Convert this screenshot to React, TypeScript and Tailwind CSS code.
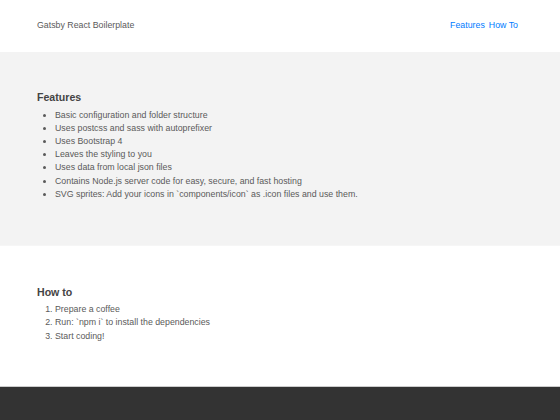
import React from 'react';

const features = [
  'Basic configuration and folder structure',
  'Uses postcss and sass with autoprefixer',
  'Uses Bootstrap 4',
  'Leaves the styling to you',
  'Uses data from local json files',
  'Contains Node.js server code for easy, secure, and fast hosting',
  'SVG sprites: Add your icons in `components/icon` as .icon files and use them.',
];

const steps = ['Prepare a coffee', 'Run: `npm i` to install the dependencies', 'Start coding!'];

export default function App() {
  return (
    <div className="min-h-[420px] bg-white text-[8.8px] leading-[1.5] text-[#5a5a5a] font-['Liberation_Sans',Arial,sans-serif]">
      <header className="flex h-[52px] items-center justify-between pl-[37px] pr-[42px]">
        <span>Gatsby React Boilerplate</span>
        <nav className="flex gap-[4px] text-[#007bff]">
          <a href="#features">Features</a>
          <a href="#howto">How To</a>
        </nav>
      </header>

      <section id="features" className="h-[193px] bg-[#f3f3f3] px-[37px] pt-[39px]">
        <h2 className="mb-[5px] text-[10.6px] font-bold leading-[1.2] text-[#444]">Features</h2>
        <ul className="list-disc pl-[18px]">
          {features.map((f) => (
            <li key={f}>{f}</li>
          ))}
        </ul>
      </section>

      <section id="howto" className="h-[141px] border-t border-[#f6f6f6] px-[37px] pt-[40px]">
        <h2 className="mb-[4.5px] text-[10.6px] font-bold leading-[1.2] text-[#444]">How to</h2>
        <ol className="list-decimal pl-[18px]">
          {steps.map((s) => (
            <li key={s}>{s}</li>
          ))}
        </ol>
      </section>

      <footer className="h-[40px] border-t border-[#ccc] bg-[#333]" />
    </div>
  );
}
